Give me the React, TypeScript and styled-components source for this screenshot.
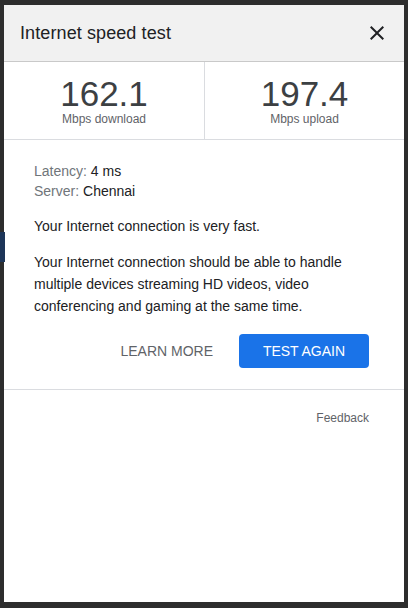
import React from "react";
import styled, { createGlobalStyle } from "styled-components";

const Global = createGlobalStyle`
  html, body { margin: 0; padding: 0; background: #2d2d2d; }
  body { font-family: "Liberation Sans", Arial, sans-serif; }
  * { box-sizing: border-box; }
`;

const Screen = styled.div`
  position: relative;
  width: 408px;
  height: 608px;
  padding: 5px 4px 6px 4px;
  background: #2d2d2d;
`;

const PageBleed = styled.div`
  position: absolute;
  left: 0;
  top: 232px;
  width: 5px;
  height: 30px;
  background: #1d3558;
`;

const Dialog = styled.div`
  width: 400px;
  height: 597px;
  background: #ffffff;
  display: flex;
  flex-direction: column;
`;

const Header = styled.div`
  height: 57px;
  background: #f1f1f1;
  border-bottom: 1px solid #c9c9c9;
  display: flex;
  align-items: center;
  justify-content: space-between;
  padding: 0 15px 0 16px;
`;

const Title = styled.h1`
  margin: 0;
  font-size: 18px;
  font-weight: 400;
  color: #202124;
  letter-spacing: 0.1px;
`;

const CloseButton = styled.button`
  border: 0;
  background: none;
  padding: 0;
  width: 24px;
  height: 24px;
  display: flex;
  align-items: center;
  justify-content: center;
  cursor: pointer;
  color: #202124;
`;

const Stats = styled.div`
  display: grid;
  grid-template-columns: 1fr 1fr;
  height: 78px;
  border-bottom: 1px solid #dadce0;
`;

const Stat = styled.div<{ $divider?: boolean }>`
  display: flex;
  flex-direction: column;
  align-items: center;
  padding-top: 14px;
  border-left: ${(p) => (p.$divider ? "1px solid #dadce0" : "none")};
`;

const Value = styled.div`
  font-size: 35px;
  line-height: 36px;
  color: #3c4043;
`;

const Unit = styled.div`
  font-size: 12px;
  line-height: 14px;
  margin-top: 0px;
  color: #5f6368;
`;

const Content = styled.div`
  padding: 21px 35px 0 30px;
  font-size: 14px;
  color: #202124;
`;

const InfoLine = styled.div`
  line-height: 20px;
`;

const Label = styled.span`
  color: #70757a;
`;

const Message = styled.p<{ $lh: number }>`
  margin: 15px 0 0 0;
  line-height: ${(p) => p.$lh}px;
`;

const Actions = styled.div`
  display: flex;
  justify-content: flex-end;
  align-items: center;
  gap: 10px;
  margin-top: 17px;
`;

const TextButton = styled.button`
  border: 0;
  background: none;
  height: 34px;
  padding: 0 16px;
  font-family: inherit;
  font-size: 14px;
  color: #5f6368;
  text-transform: uppercase;
  cursor: pointer;
`;

const PrimaryButton = styled.button`
  border: 0;
  background: #1a73e8;
  border-radius: 4px;
  height: 34px;
  width: 130px;
  font-family: inherit;
  font-size: 14px;
  color: #ffffff;
  text-transform: uppercase;
  cursor: pointer;
`;

const Divider = styled.hr`
  margin: 21px 0 0 0;
  border: 0;
  border-top: 1px solid #dadce0;
`;

const Footer = styled.div`
  display: flex;
  justify-content: flex-end;
  padding: 20px 35px 0 0;
`;

const FeedbackLink = styled.a`
  font-size: 12px;
  line-height: 16px;
  color: #5f6368;
  text-decoration: none;
`;

export default function App() {
  return (
    <>
      <Global />
      <Screen>
        <PageBleed />
        <Dialog>
          <Header>
            <Title>Internet speed test</Title>
            <CloseButton aria-label="Close">
              <svg width="24" height="24" viewBox="0 0 24 24" fill="currentColor">
                <path d="M19 6.41L17.59 5 12 10.59 6.41 5 5 6.41 10.59 12 5 17.59 6.41 19 12 13.41 17.59 19 19 17.59 13.41 12z" />
              </svg>
            </CloseButton>
          </Header>
          <Stats>
            <Stat>
              <Value>162.1</Value>
              <Unit>Mbps download</Unit>
            </Stat>
            <Stat $divider>
              <Value>197.4</Value>
              <Unit>Mbps upload</Unit>
            </Stat>
          </Stats>
          <Content>
            <InfoLine>
              <Label>Latency:</Label> 4 ms
            </InfoLine>
            <InfoLine>
              <Label>Server:</Label> Chennai
            </InfoLine>
            <Message $lh={20}>Your Internet connection is very fast.</Message>
            <Message $lh={22}>
              Your Internet connection should be able to handle multiple devices streaming HD videos, video
              conferencing and gaming at the same time.
            </Message>
            <Actions>
              <TextButton>Learn more</TextButton>
              <PrimaryButton>Test again</PrimaryButton>
            </Actions>
          </Content>
          <Divider />
          <Footer>
            <FeedbackLink href="#">Feedback</FeedbackLink>
          </Footer>
        </Dialog>
      </Screen>
    </>
  );
}
